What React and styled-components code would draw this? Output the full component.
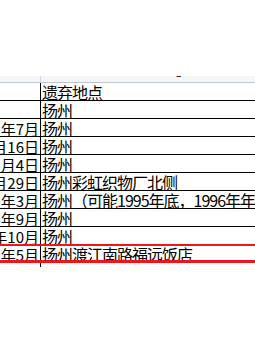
import React from 'react';
import styled, { createGlobalStyle } from 'styled-components';

const GlobalStyle = createGlobalStyle`
  html, body {
    margin: 0;
    padding: 0;
    background: #ffffff;
  }
  body {
    font-family: "Noto Sans CJK SC", "Noto Sans", sans-serif;
    color: #000000;
  }
`;

const Sheet = styled.div`
  width: 255px;
  height: 340px;
  overflow: hidden;
  background: #ffffff;
`;

const TopSpace = styled.div`
  height: 76px;
`;

const HeaderBand = styled.div`
  display: grid;
  grid-template-columns: 41px 1fr;
  height: 7px;
  box-sizing: border-box;
  background: #f3f5f8;
  border-bottom: 1px solid #bfc4d2;
`;

const HeaderCell = styled.div`
  box-sizing: border-box;
  border-right: ${(p) => (p.$divider ? '1px solid #d4d8e2' : 'none')};
  display: flex;
  align-items: flex-start;
  padding-left: ${(p) => p.$markAt || 0}px;
`;

const Mark = styled.span`
  display: block;
  width: 4px;
  height: 1px;
  border-left: 1px solid #e07a1f;
  background: #1f3a6e;
`;

const Row = styled.div`
  display: grid;
  grid-template-columns: 41px 1fr;
  height: ${(p) => (p.$marked ? '19px' : '18px')};
  box-sizing: border-box;
  margin-top: ${(p) => (p.$marked ? '-1px' : '0')};
  border-top: ${(p) => (p.$marked ? '2px solid #f0141c' : 'none')};
  border-bottom: ${(p) => (p.$marked ? '3px solid #f0141c' : '1px solid #000000')};
`;

const Cell = styled.div`
  box-sizing: border-box;
  overflow: hidden;
  white-space: nowrap;
  font-size: 16px;
  letter-spacing: -1px;
  line-height: 17px;
  padding-top: ${(p) => (p.$marked ? '0' : '1px')};
`;

/* dates are right-aligned and run off the left edge of the view */
const DateCell = styled(Cell)`
  border-right: 1px solid #000000;
  display: flex;
  justify-content: flex-end;
  font-size: 15px;
  letter-spacing: 0;
  padding-right: 1px;
`;

const PlaceCell = styled(Cell)`
  padding-left: 1px;
`;

const Tail = styled.div`
  width: 41px;
  height: 4px;
  box-sizing: border-box;
  border-right: 1px solid #000000;
`;

const rows = [
  { date: '', place: '遗弃地点' },
  { date: '', place: '扬州' },
  { date: '1993年7月', place: '扬州' },
  { date: '1994年3月16日', place: '扬州' },
  { date: '1994年5月4日', place: '扬州' },
  { date: '1994年6月29日', place: '扬州彩虹织物厂北侧' },
  { date: '1995年3月', place: '扬州（可能1995年底，1996年年初）' },
  { date: '1996年9月', place: '扬州' },
  { date: '1996年10月', place: '扬州' },
  { date: '1997年5月', place: '扬州渡江南路福远饭店', marked: true },
];

export default function App() {
  return (
    <Sheet>
      <GlobalStyle />
      <TopSpace />
      <HeaderBand>
        <HeaderCell $divider />
        <HeaderCell $markAt={135}>
          <Mark />
        </HeaderCell>
      </HeaderBand>
      {rows.map((r, i) => (
        <Row key={i} $marked={r.marked}>
          <DateCell $marked={r.marked}>{r.date}</DateCell>
          <PlaceCell $marked={r.marked}>{r.place}</PlaceCell>
        </Row>
      ))}
      <Tail />
    </Sheet>
  );
}
